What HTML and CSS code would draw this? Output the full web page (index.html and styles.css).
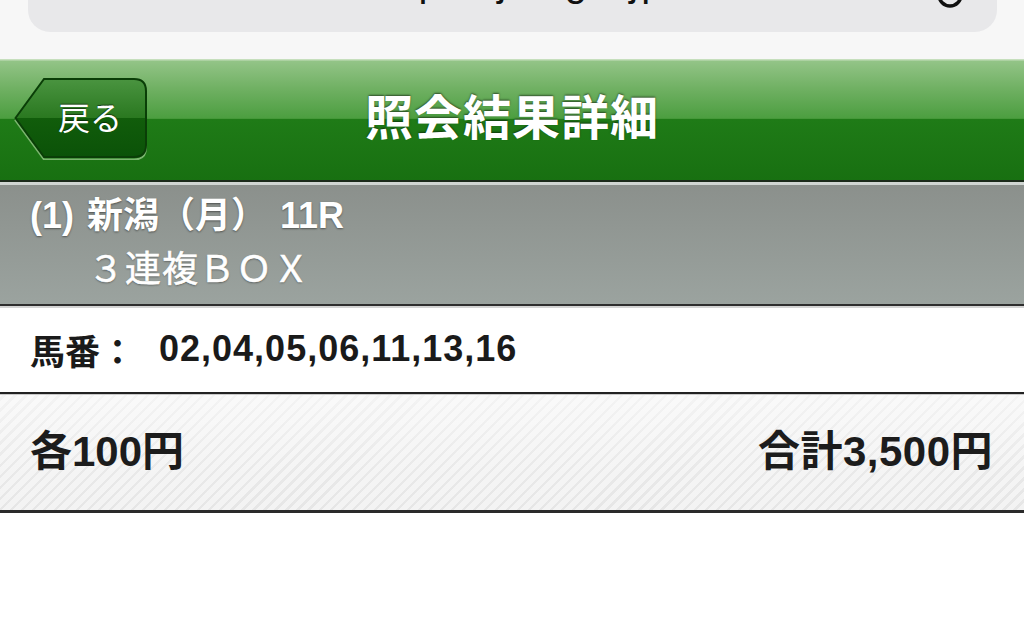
FILE: index.html
```html
<!DOCTYPE html>
<html lang="ja">
<head>
<meta charset="utf-8">
<title>照会結果詳細</title>
<link rel="stylesheet" href="styles.css">
</head>
<body>
<div class="browser">
  <div class="urlbar">
    <span class="url">ipat.jra.go.jp</span>
    <svg class="reload" width="30" height="30" viewBox="0 0 30 30"><circle cx="15" cy="15" r="11" fill="none" stroke="#111" stroke-width="3.5"/></svg>
  </div>
</div>
<header class="navbar">
  <div class="nav-left">
    <a class="back">
      <svg class="back-shape" width="136" height="84" viewBox="0 0 136 84">
        <defs>
          <linearGradient id="bg" x1="0" y1="0" x2="0" y2="1">
            <stop offset="0" stop-color="#4a9440"/>
            <stop offset="0.5" stop-color="#2a7820"/>
            <stop offset="0.5" stop-color="#115d0b"/>
            <stop offset="1" stop-color="#0b5208"/>
          </linearGradient>
        </defs>
        <path d="M2.5 43 L31 4 L121 4 Q133 4 133 16 L133 70 Q133 82 121 82 L31 82 Z" fill="none" stroke="#7bb56f" stroke-width="2" transform="translate(0,1.5)"/>
        <path d="M2.5 42 L31 3 L121 3 Q133 3 133 15 L133 69 Q133 81 121 81 L31 81 Z" fill="url(#bg)" stroke="#0a3e07" stroke-width="2"/>
      </svg>
      <span class="back-label">戻る</span>
    </a>
  </div>
  <h1 class="title">照会結果詳細</h1>
  <div class="nav-right"></div>
</header>
<section class="race">
  <div class="race-line1">(1) 新潟（月） 11R</div>
  <div class="race-line2">３連複ＢＯＸ</div>
</section>
<section class="horses">
  <span class="horses-label">馬番：</span>
  <span class="horses-nums">02,04,05,06,11,13,16</span>
</section>
<section class="amount">
  <span class="amount-each">各100円</span>
  <span class="amount-total">合計3,500円</span>
</section>
</body>
</html>
```

FILE: styles.css
```css
* { box-sizing: border-box; }
html, body { margin: 0; padding: 0; background: #ffffff; }
body {
  font-family: "Liberation Sans", "Noto Sans CJK JP", sans-serif;
  width: 1024px;
  overflow: hidden;
}

.browser {
  height: 59px;
  background: #f7f7f7;
  padding: 0 27px 0 28px;
  overflow: hidden;
}
.urlbar {
  height: 63px;
  margin-top: -31px;
  background: #e8e8ea;
  border-radius: 22px;
  display: flex;
  align-items: flex-start;
  overflow: hidden;
}
.url {
  flex: 1;
  display: block;
  text-align: center;
  font-size: 40px;
  line-height: 40px;
  color: #111;
  letter-spacing: 3px;
  margin-top: -7px;
  padding-left: 110px;
}
.reload {
  flex: none;
  margin-right: 32px;
  margin-top: 11px;
}

.navbar {
  height: 123px;
  display: grid;
  grid-template-columns: 1fr auto 1fr;
  align-items: center;
  background: linear-gradient(#c6dfbd 0, #c6dfbd 1px, #93c487 2px, #6fb062 25%, #4c9e40 49%, #1f7b17 50%, #187011 100%);
  border-bottom: 2px solid #1b2a1a;
  box-shadow: 0 3px 0 #d0d5d2;
  padding-bottom: 3px;
}
.nav-left {
  display: flex;
  align-items: center;
  padding-left: 13px;
}
.back {
  position: relative;
  width: 136px;
  height: 84px;
  display: flex;
  align-items: center;
  justify-content: center;
  padding-left: 18px;
}
.back-shape {
  position: absolute;
  left: 0;
  top: 0;
}
.back-label {
  position: relative;
  color: #ffffff;
  font-size: 32px;
  font-family: "Noto Sans CJK JP", sans-serif;
  font-weight: 400;
  text-shadow: 0 -1px 1px rgba(0,0,0,0.5);
  margin-top: -5px;
}
.title {
  margin: 0;
  color: #ffffff;
  font-family: "Noto Sans CJK JP", sans-serif;
  font-size: 48px;
  font-weight: 700;
  letter-spacing: 1px;
  text-shadow: 0 -1px 2px rgba(0,0,0,0.55);
  margin-top: -9px;
}

.race {
  margin-top: 3px;
  height: 121px;
  background: linear-gradient(#8b908c, #9ba39f);
  padding: 9px 0 0 30px;
  border-bottom: 2px solid #2e2e2e;
  color: #ffffff;
  text-shadow: 0 1px 2px rgba(0,0,0,0.45);
}
.race-line1 {
  font-size: 36px;
  font-weight: 700;
  line-height: 44px;
  word-spacing: 3px;
  white-space: pre;
}
.race-line2 {
  font-size: 36px;
  font-weight: 400;
  line-height: 46px;
  margin-top: 5px;
  padding-left: 58px;
  letter-spacing: 1px;
  font-family: "Noto Sans CJK JP", sans-serif;
  -webkit-text-stroke: 0.6px #ffffff;
}

.horses {
  height: 88px;
  border-top: 2px solid #d4d4d4;
  border-bottom: 2px solid #222222;
  display: flex;
  align-items: center;
  gap: 24px;
  padding: 0 0 2px 30px;
  color: #1a1a1a;
}
.horses-label {
  font-size: 35px;
  font-weight: 700;
  font-family: "Noto Sans CJK JP", sans-serif;
}
.horses-nums {
  font-size: 36px;
  font-weight: 700;
  letter-spacing: 1px;
}

.amount {
  height: 119px;
  border-top: 1px solid #c9c9c9;
  border-bottom: 3px solid #2a2a2a;
  box-shadow: 0 2px 0 #cfcfcf;
  background-color: #f3f3f3;
  background-image:
    linear-gradient(rgba(255,255,255,0.55), rgba(255,255,255,0.15) 60%, rgba(255,255,255,0)),
    repeating-linear-gradient(-45deg, rgba(0,0,0,0) 0, rgba(0,0,0,0) 5.5px, rgba(0,0,0,0.055) 5.5px, rgba(0,0,0,0.055) 7.8px);
  display: flex;
  align-items: center;
  justify-content: space-between;
  padding: 0 31px 10px 30px;
  color: #1c1c1c;
  font-size: 42px;
  font-weight: 700;
}
.amount-total { letter-spacing: 0.5px; }
```
